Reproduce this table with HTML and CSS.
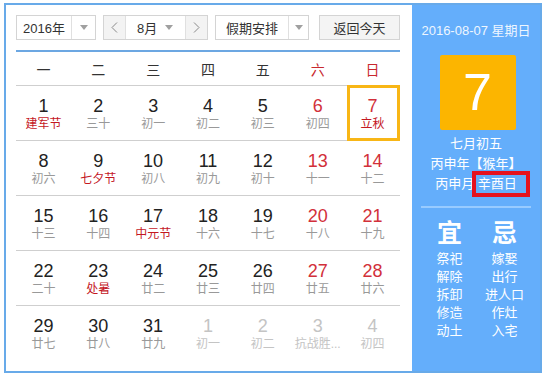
FILE: index.html
```html
<!DOCTYPE html>
<html lang="zh">
<head>
<meta charset="utf-8">
<link rel="stylesheet" href="styles.css">
</head>
<body>
<div class="frame">
  <div class="main">
    <div class="toolbar">
      <div class="sel sel-year">
        <span class="sel-text">2016年</span>
        <span class="sel-arrow"><svg width="8" height="5" viewBox="0 0 8 5"><path d="M0 0H8L4 5Z" fill="#a0a0a0"/></svg></span>
      </div>
      <div class="sel sel-month">
        <span class="nav"><svg width="7" height="11" viewBox="0 0 7 11"><path d="M6 0.5L1 5.5L6 10.5" fill="none" stroke="#888" stroke-width="1"/></svg></span>
        <span class="month-mid"><span class="month-text">8月</span><svg width="8" height="5" viewBox="0 0 8 5"><path d="M0 0H8L4 5Z" fill="#a0a0a0"/></svg></span>
        <span class="nav"><svg width="7" height="11" viewBox="0 0 7 11"><path d="M1 0.5L6 5.5L1 10.5" fill="none" stroke="#888" stroke-width="1"/></svg></span>
      </div>
      <div class="sel sel-holiday">
        <span class="sel-text">假期安排</span>
        <span class="sel-arrow"><svg width="8" height="5" viewBox="0 0 8 5"><path d="M0 0H8L4 5Z" fill="#a0a0a0"/></svg></span>
      </div>
      <div class="btn-today">返回今天</div>
    </div>
    <div class="table">
      <div class="week">
        <span>一</span><span>二</span><span>三</span><span>四</span><span>五</span><span class="red">六</span><span class="red">日</span>
      </div>
      <div class="row">
        <div class="cell"><b>1</b><i class="fest">建军节</i></div>
        <div class="cell"><b>2</b><i>三十</i></div>
        <div class="cell"><b>3</b><i>初一</i></div>
        <div class="cell"><b>4</b><i>初二</i></div>
        <div class="cell"><b>5</b><i>初三</i></div>
        <div class="cell wk"><b>6</b><i>初四</i></div>
        <div class="cell wk today"><b>7</b><i class="fest">立秋</i></div>
      </div>
      <div class="row">
        <div class="cell"><b>8</b><i>初六</i></div>
        <div class="cell"><b>9</b><i class="fest">七夕节</i></div>
        <div class="cell"><b>10</b><i>初八</i></div>
        <div class="cell"><b>11</b><i>初九</i></div>
        <div class="cell"><b>12</b><i>初十</i></div>
        <div class="cell wk"><b>13</b><i>十一</i></div>
        <div class="cell wk"><b>14</b><i>十二</i></div>
      </div>
      <div class="row">
        <div class="cell"><b>15</b><i>十三</i></div>
        <div class="cell"><b>16</b><i>十四</i></div>
        <div class="cell"><b>17</b><i class="fest">中元节</i></div>
        <div class="cell"><b>18</b><i>十六</i></div>
        <div class="cell"><b>19</b><i>十七</i></div>
        <div class="cell wk"><b>20</b><i>十八</i></div>
        <div class="cell wk"><b>21</b><i>十九</i></div>
      </div>
      <div class="row">
        <div class="cell"><b>22</b><i>二十</i></div>
        <div class="cell"><b>23</b><i class="fest">处暑</i></div>
        <div class="cell"><b>24</b><i>廿二</i></div>
        <div class="cell"><b>25</b><i>廿三</i></div>
        <div class="cell"><b>26</b><i>廿四</i></div>
        <div class="cell wk"><b>27</b><i>廿五</i></div>
        <div class="cell wk"><b>28</b><i>廿六</i></div>
      </div>
      <div class="row last">
        <div class="cell"><b>29</b><i>廿七</i></div>
        <div class="cell"><b>30</b><i>廿八</i></div>
        <div class="cell"><b>31</b><i>廿九</i></div>
        <div class="cell other"><b>1</b><i>初一</i></div>
        <div class="cell other"><b>2</b><i>初二</i></div>
        <div class="cell other"><b>3</b><i>抗战胜...</i></div>
        <div class="cell other"><b>4</b><i>初四</i></div>
      </div>
    </div>
  </div>
  <div class="panel">
    <div class="p-date">2016-08-07 星期日</div>
    <div class="p-day">7</div>
    <div class="p-lunar">
      <div>七月初五</div>
      <div>丙申年【猴年】</div>
      <div>丙申月 <span class="mark">辛酉日</span></div>
    </div>
    <div class="p-sep"></div>
    <div class="p-yj">
      <div class="col">
        <div class="big">宜</div>
        <div>祭祀</div><div>解除</div><div>拆卸</div><div>修造</div><div>动土</div>
      </div>
      <div class="col">
        <div class="big">忌</div>
        <div>嫁娶</div><div>出行</div><div>进人口</div><div>作灶</div><div>入宅</div>
      </div>
    </div>
  </div>
</div>
</body>
</html>
```

FILE: styles.css
```css
* { box-sizing: border-box; }
html, body { margin: 0; padding: 0; background: #fff; }
body {
  font-family: "Liberation Sans", "Noto Sans CJK SC", sans-serif;
  color: #333;
  width: 548px;
  height: 379px;
  overflow: hidden;
}
.frame {
  margin: 3px 0 0 4px;
  width: 538px;
  height: 370px;
  border: 2px solid #68aae9;
  display: flex;
}
.main {
  width: 406px;
  padding: 10px 0 0 10px;
}
.toolbar {
  display: flex;
  height: 25px;
  font-size: 13px;
  color: #333;
}
.sel {
  display: flex;
  border: 1px solid #d4d4d4;
  height: 25px;
  background: #fff;
}
.sel-text {
  display: flex;
  align-items: center;
  justify-content: center;
}
.sel-arrow {
  display: flex;
  align-items: center;
  justify-content: center;
  border-left: 1px solid #e0e0e0;
}
.sel-year { width: 80px; }
.sel-year .sel-text { width: 54px; }
.sel-year .sel-arrow { width: 24px; }
.sel-month { width: 105px; margin-left: 7px; }
.nav {
  width: 22px;
  background: #f3f3f3;
  display: flex;
  align-items: center;
  justify-content: center;
}
.sel-month .nav:first-child { border-right: 1px solid #e0e0e0; }
.sel-month .nav:last-child { border-left: 1px solid #e0e0e0; }
.month-mid {
  flex: 1;
  display: flex;
  align-items: center;
  justify-content: space-between;
  padding: 0 12px 0 11px;
}
.sel-holiday { width: 94px; margin-left: 7px; }
.sel-holiday .sel-text { width: 72px; }
.sel-holiday .sel-arrow { width: 20px; }
.btn-today {
  margin-left: 10px;
  width: 81px;
  height: 25px;
  border: 1px solid #d4d4d4;
  background: #f4f4f4;
  display: flex;
  align-items: center;
  justify-content: center;
}
.table {
  margin-top: 10px;
  width: 384px;
  border-top: 2px solid #6ca7e2;
}
.week {
  display: grid;
  grid-template-columns: repeat(7, 1fr);
  height: 34px;
  border-bottom: 1px solid #cfcfcf;
  font-size: 14px;
  align-items: center;
  text-align: center;
  color: #333;
}
.week .red { color: #c8282e; }
.row {
  display: grid;
  grid-template-columns: repeat(7, 1fr);
  height: 55px;
  border-bottom: 1px solid #cfcfcf;
}
.row.last { border-bottom: none; }
.cell {
  position: relative;
  display: flex;
  flex-direction: column;
  align-items: center;
  padding-top: 10px;
}
.cell b {
  font-weight: normal;
  font-size: 18px;
  line-height: 20px;
  color: #222;
}
.cell i {
  font-style: normal;
  font-size: 12px;
  line-height: 17px;
  color: #999;
  white-space: nowrap;
}
.cell i.fest { color: #c4181f; }
.cell.wk b { color: #d2303a; }
.cell.other b, .cell.other i { color: #c4c4c4; }
.cell.today::after {
  content: "";
  position: absolute;
  left: 2px;
  right: 0;
  top: -1px;
  bottom: -1px;
  border: 3px solid #f8b616;
}
.panel {
  flex: 1;
  background: #64aefb;
  color: #fff;
  display: flex;
  flex-direction: column;
  align-items: center;
}
.p-date {
  margin-top: 17px;
  font-size: 13px;
  line-height: 18px;
  color: #eef6ff;
  white-space: nowrap;
}
.p-day {
  margin-top: 15px;
  margin-left: 3px;
  width: 76px;
  height: 75px;
  background: #fcb500;
  border-radius: 2px;
  font-size: 52px;
  line-height: 75px;
  text-align: center;
  color: #fff;
}
.p-lunar {
  margin-top: 4px;
  font-size: 13px;
  line-height: 20px;
  text-align: center;
  white-space: nowrap;
}
.mark { position: relative; }
.mark::after {
  content: "";
  position: absolute;
  left: -6px;
  right: -13px;
  top: -5px;
  bottom: -6px;
  border: 4px solid #e5121e;
}
.p-sep {
  margin-top: 12px;
  width: 110px;
  height: 2px;
  background: #98cbff;
}
.p-yj {
  margin-top: 10px;
  display: flex;
  margin-left: 2px;
}
.col {
  width: 55px;
  text-align: center;
  font-size: 13px;
  line-height: 18px;
}
.col .big {
  font-size: 25px;
  line-height: 30px;
  font-weight: bold;
  margin-bottom: 2px;
}
```
